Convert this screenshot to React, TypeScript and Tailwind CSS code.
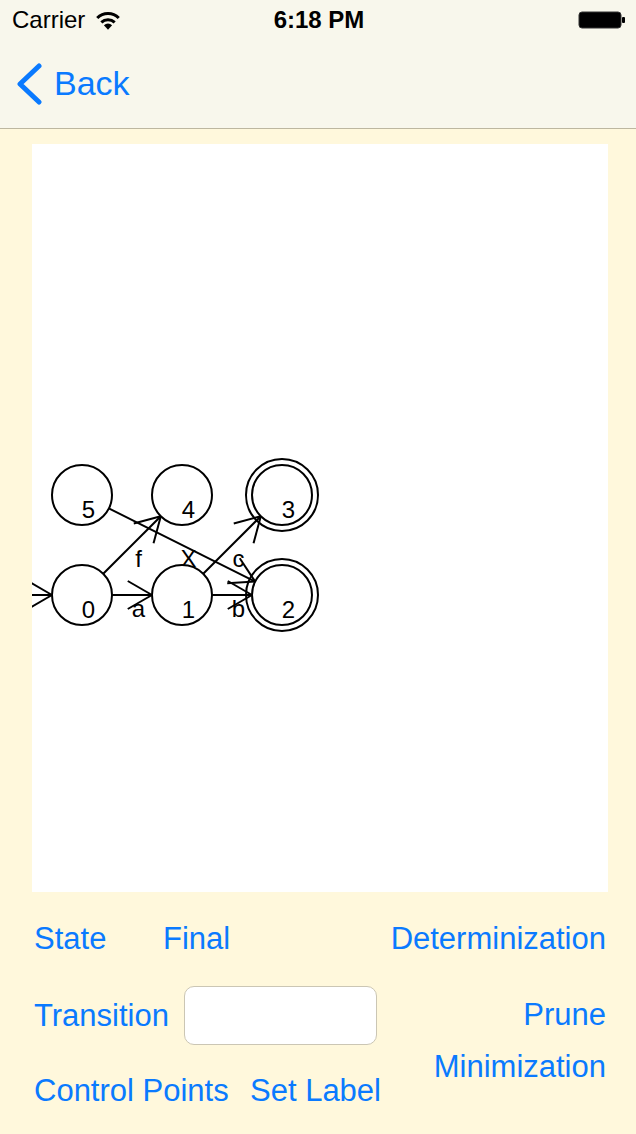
import React from 'react';

type Node = { id: string; x: number; y: number; final?: boolean };

const nodes: Node[] = [
  { id: '5', x: 82, y: 495 },
  { id: '4', x: 182, y: 495 },
  { id: '3', x: 282, y: 495, final: true },
  { id: '0', x: 82, y: 595 },
  { id: '1', x: 182, y: 595 },
  { id: '2', x: 282, y: 595, final: true },
];

const edges: [string, string, string][] = [
  ['0', '1', 'a'],
  ['1', '2', 'b'],
  ['0', '4', 'f'],
  ['1', '3', 'c'],
  ['5', '2', 'X'],
];

const R = 30;
const HEAD = 28;

// arrow head lines at the tip, 30deg each side
function arrowHead(tx: number, ty: number, ux: number, uy: number) {
  const back = Math.atan2(-uy, -ux);
  const a1 = back + Math.PI / 6;
  const a2 = back - Math.PI / 6;
  return [
    [tx + HEAD * Math.cos(a1), ty + HEAD * Math.sin(a1)],
    [tx + HEAD * Math.cos(a2), ty + HEAD * Math.sin(a2)],
  ];
}

function Graph() {
  const byId = (id: string) => nodes.find(n => n.id === id)!;
  return (
    <svg viewBox="32 144 576 748" className="w-full h-full" style={{ fontFamily: '"Liberation Sans", Arial, sans-serif' }}>
      {/* initial arrow into 0 */}
      <g stroke="#000" strokeWidth={2} fill="none">
        <line x1={10} y1={595} x2={52} y2={595} />
        {arrowHead(52, 595, 1, 0).map(([x, y], i) => (
          <line key={i} x1={x} y1={y} x2={52} y2={595} />
        ))}
      </g>

      {edges.map(([from, to, label]) => {
        const a = byId(from);
        const b = byId(to);
        const dx = b.x - a.x;
        const dy = b.y - a.y;
        const len = Math.hypot(dx, dy);
        const ux = dx / len;
        const uy = dy / len;
        const sx = a.x + ux * R;
        const sy = a.y + uy * R;
        const ex = b.x - ux * R;
        const ey = b.y - uy * R;
        const mx = (a.x + b.x) / 2;
        const my = (a.y + b.y) / 2;
        return (
          <g key={from + to}>
            <g stroke="#000" strokeWidth={2} fill="none">
              <line x1={sx} y1={sy} x2={ex} y2={ey} />
              {arrowHead(ex, ey, ux, uy).map(([x, y], i) => (
                <line key={i} x1={x} y1={y} x2={ex} y2={ey} />
              ))}
            </g>
            <text x={mx + 6.5} y={my + 22} textAnchor="middle" fontSize={24} fill="#000">
              {label}
            </text>
          </g>
        );
      })}

      {nodes.map(n => (
        <g key={n.id}>
          <circle cx={n.x} cy={n.y} r={R} fill="#fff" stroke="#000" strokeWidth={2} />
          {n.final && <circle cx={n.x} cy={n.y} r={36} fill="none" stroke="#000" strokeWidth={2} />}
          <text x={n.x + 6.5} y={n.y + 23} textAnchor="middle" fontSize={24} fill="#000">
            {n.id}
          </text>
        </g>
      ))}
    </svg>
  );
}

function Wifi() {
  return (
    <svg width="28" height="22" viewBox="0 0 26 20">
      <path d="M13 19 L9.2 14.8 A5.6 5.6 0 0 1 16.8 14.8 Z" fill="#000" />
      <path d="M6.8 12.2 A9 9 0 0 1 19.2 12.2" stroke="#000" strokeWidth="2.8" fill="none" />
      <path d="M3 8.2 A14 14 0 0 1 23 8.2" stroke="#000" strokeWidth="2.8" fill="none" />
    </svg>
  );
}

function Battery() {
  return (
    <svg width="48" height="18" viewBox="0 0 48 18">
      <rect x="1" y="1" width="42" height="16" rx="3" fill="#000" stroke="#333" strokeWidth="1" />
      <rect x="44" y="6" width="3" height="6" rx="1" fill="#000" />
    </svg>
  );
}

export default function App() {
  const blue = 'text-[#0a7aff]';
  return (
    <div className="w-[636px] h-[1134px] bg-[#fff8dc] flex flex-col overflow-hidden" style={{ fontFamily: '"Liberation Sans", Arial, sans-serif' }}>
      {/* status + nav */}
      <div className="bg-[#f8f7ec] border-b border-[#bdb7a0]">
        <div className="h-[40px] flex items-center pl-[12px] pr-[10px] text-[24px] text-black">
          <div className="flex-1 flex items-center gap-[9px]">
            <span>Carrier</span>
            <Wifi />
          </div>
          <span className="font-bold">6:18 PM</span>
          <div className="flex-1 flex justify-end">
            <Battery />
          </div>
        </div>
        <div className="h-[88px] flex items-center pl-[14px]">
          <svg width="30" height="42" viewBox="0 0 30 42">
            <polyline points="25,3 6,21 25,39" fill="none" stroke="#0a7aff" strokeWidth="5" strokeLinecap="round" strokeLinejoin="round" />
          </svg>
          <span className={`${blue} text-[34px] ml-[10px] pb-[2px]`}>Back</span>
        </div>
      </div>

      {/* canvas */}
      <div className="ml-[32px] mr-[28px] mt-[15px] h-[748px] bg-white overflow-hidden">
        <Graph />
      </div>

      {/* controls */}
      <div className={`flex justify-between pl-[34px] pr-[30px] text-[31px] leading-[36px] ${blue}`}>
        <div className="flex flex-col pt-[29px]">
          <div className="flex">
            <span className="w-[129px]">State</span>
            <span>Final</span>
          </div>
          <div className="flex items-center mt-[29px]">
            <span className="w-[150px]">Transition</span>
            <div className="w-[193px] h-[59px] bg-white border border-[#cbc6b4] rounded-[10px]" />
          </div>
          <div className="flex mt-[28px]">
            <span className="w-[216px]">Control Points</span>
            <span>Set Label</span>
          </div>
        </div>
        <div className="flex flex-col items-end pt-[29px]">
          <span>Determinization</span>
          <span className="mt-[40px]">Prune</span>
          <span className="mt-[16px]">Minimization</span>
        </div>
      </div>
    </div>
  );
}
